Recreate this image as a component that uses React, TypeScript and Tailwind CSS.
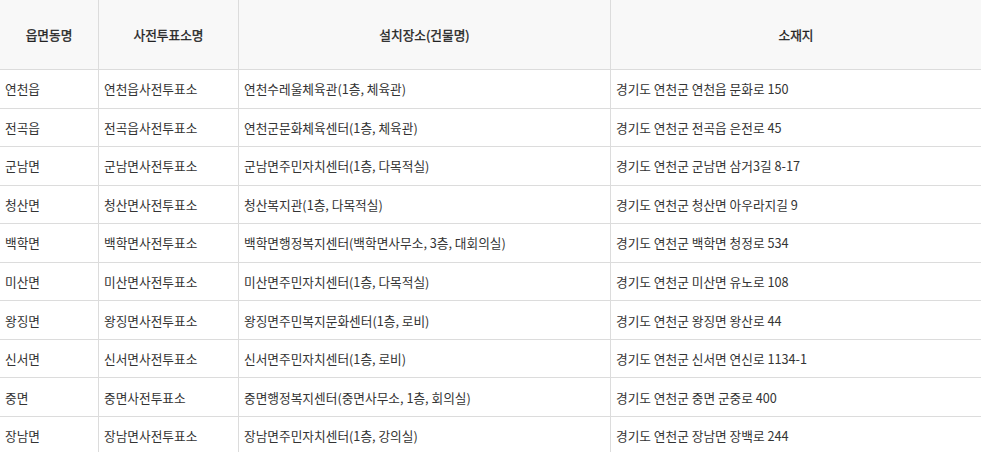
const ROWS = [
  ["연천읍", "연천읍사전투표소", "연천수레울체육관(1층, 체육관)", "경기도 연천군 연천읍 문화로 150"],
  ["전곡읍", "전곡읍사전투표소", "연천군문화체육센터(1층, 체육관)", "경기도 연천군 전곡읍 은전로 45"],
  ["군남면", "군남면사전투표소", "군남면주민자치센터(1층, 다목적실)", "경기도 연천군 군남면 삼거3길 8-17"],
  ["청산면", "청산면사전투표소", "청산복지관(1층, 다목적실)", "경기도 연천군 청산면 아우라지길 9"],
  ["백학면", "백학면사전투표소", "백학면행정복지센터(백학면사무소, 3층, 대회의실)", "경기도 연천군 백학면 청정로 534"],
  ["미산면", "미산면사전투표소", "미산면주민자치센터(1층, 다목적실)", "경기도 연천군 미산면 유노로 108"],
  ["왕징면", "왕징면사전투표소", "왕징면주민복지문화센터(1층, 로비)", "경기도 연천군 왕징면 왕산로 44"],
  ["신서면", "신서면사전투표소", "신서면주민자치센터(1층, 로비)", "경기도 연천군 신서면 연신로 1134-1"],
  ["중면", "중면사전투표소", "중면행정복지센터(중면사무소, 1층, 회의실)", "경기도 연천군 중면 군중로 400"],
  ["장남면", "장남면사전투표소", "장남면주민자치센터(1층, 강의실)", "경기도 연천군 장남면 장백로 244"],
];

const HEADERS = ["읍면동명", "사전투표소명", "설치장소(건물명)", "소재지"];

const GRID = "grid grid-cols-[99px_140px_372px_1fr]";

export default function App() {
  return (
    <div
      className="w-[981px] bg-white text-[12.7px] text-[#333]"
      style={{ fontFamily: '"Noto Sans CJK KR", "Noto Sans", sans-serif' }}
    >
      {/* header */}
      <div className={`${GRID} h-[70px] bg-[#f8f8f8] border-b border-[#dcdcdc]`}>
        {HEADERS.map((h, i) => (
          <div
            key={h}
            className={`flex items-center justify-center text-[#222] [-webkit-text-stroke:0.3px] ${
              i < 3 ? "border-r border-[#dcdcdc]" : ""
            }`}
          >
            {h}
          </div>
        ))}
      </div>

      {/* rows */}
      {ROWS.map((row) => (
        <div key={row[0]} className={`${GRID} h-[38.56px] border-b border-[#dcdcdc]`}>
          {row.map((cell, i) => (
            <div
              key={i}
              className={`flex items-center pl-[5px] whitespace-nowrap ${
                i < 3 ? "border-r border-[#dcdcdc]" : ""
              }`}
            >
              {cell}
            </div>
          ))}
        </div>
      ))}
    </div>
  );
}
